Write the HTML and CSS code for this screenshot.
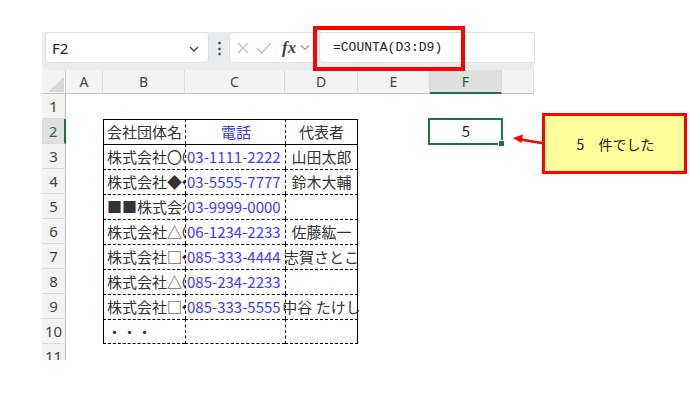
FILE: index.html
```html
<!DOCTYPE html>
<html lang="ja">
<head>
    <meta charset="UTF-8">
    <meta name="viewport" content="width=device-width, initial-scale=1.0">
    <title>COUNTA</title>
    <link rel="stylesheet" href="styles.css">
</head>
<body>
    <div class="sheet">
        <div class="formula-bar">
            <div class="name-box">
                <span>F2</span>
                <svg class="chev" width="12" height="8" viewBox="0 0 12 8"><polyline points="2,2 6,6 10,2" fill="none" stroke="#444" stroke-width="1.4"/></svg>
            </div>
            <div class="dots">⋮</div>
            <div class="fx-box">
                <svg width="14" height="14" viewBox="0 0 14 14"><path d="M2 2 L12 12 M12 2 L2 12" stroke="#bdbdbd" stroke-width="1.2" fill="none"/></svg>
                <svg width="16" height="14" viewBox="0 0 16 14"><polyline points="1,7 5.5,12 15,2" stroke="#bdbdbd" stroke-width="1.2" fill="none"/></svg>
                <span class="fx">fx</span>
                <svg width="10" height="7" viewBox="0 0 10 7"><polyline points="1,1.5 5,5.5 9,1.5" fill="none" stroke="#9a9a9a" stroke-width="1.2"/></svg>
            </div>
            <div class="formula">=COUNTA(D3:D9)</div>
        </div>

        <div class="grid">
            <!-- column headers -->
            <div class="corner"><svg width="18" height="16" viewBox="0 0 18 16"><polygon points="17,0 17,15 1,15" fill="#d7d7d7"/></svg></div>
            <div class="col-head">A</div>
            <div class="col-head">B</div>
            <div class="col-head">C</div>
            <div class="col-head">D</div>
            <div class="col-head">E</div>
            <div class="col-head active">F</div>
            <div class="col-head"><span class="cut">G</span></div>

            <!-- 1 -->
            <div class="row-head">1</div>
            <div></div><div></div><div></div><div></div><div></div><div></div><div></div>

            <!-- 2 -->
            <div class="row-head active">2</div>
            <div></div>
            <div class="t top-solid left-solid">会社団体名</div>
            <div class="t top-solid center blue">電話</div>
            <div class="t top-solid right-solid center">代表者</div>
            <div></div>
            <div class="center selected">5<span class="handle"></span></div>
            <div></div>

            <!-- 3 -->
            <div class="row-head">3</div>
            <div></div>
            <div class="t top-solid left-solid clip">株式会社〇〇〇〇</div>
            <div class="t top-solid blue">03-1111-2222</div>
            <div class="t top-solid right-solid center"><span>山田太郎</span></div>
            <div></div><div></div><div></div>

            <!-- 4 -->
            <div class="row-head">4</div>
            <div></div>
            <div class="t left-solid clip">株式会社◆◆◆◆</div>
            <div class="t blue">03-5555-7777</div>
            <div class="t right-solid center"><span>鈴木大輔</span></div>
            <div></div><div></div><div></div>

            <!-- 5 -->
            <div class="row-head">5</div>
            <div></div>
            <div class="t left-solid clip">■■株式会社</div>
            <div class="t blue">03-9999-0000</div>
            <div class="t right-solid center"></div>
            <div></div><div></div><div></div>

            <!-- 6 -->
            <div class="row-head">6</div>
            <div></div>
            <div class="t left-solid clip">株式会社△〇〇</div>
            <div class="t blue">06-1234-2233</div>
            <div class="t right-solid center"><span>佐藤紘一</span></div>
            <div></div><div></div><div></div>

            <!-- 7 -->
            <div class="row-head">7</div>
            <div></div>
            <div class="t left-solid clip">株式会社□◆◆</div>
            <div class="t blue">085-333-4444</div>
            <div class="t right-solid center"><span>志賀さとこ</span></div>
            <div></div><div></div><div></div>

            <!-- 8 -->
            <div class="row-head">8</div>
            <div></div>
            <div class="t left-solid clip">株式会社△〇〇</div>
            <div class="t blue">085-234-2233</div>
            <div class="t right-solid center"></div>
            <div></div><div></div><div></div>

            <!-- 9 -->
            <div class="row-head">9</div>
            <div></div>
            <div class="t left-solid clip">株式会社□◆◆</div>
            <div class="t blue">085-333-5555</div>
            <div class="t right-solid center"><span>中谷 たけし</span></div>
            <div></div><div></div><div></div>

            <!-- 10 -->
            <div class="row-head">10</div>
            <div></div>
            <div class="t left-solid last clip">・・・</div>
            <div class="t last"></div>
            <div class="t right-solid last"></div>
            <div></div><div></div><div></div>

            <!-- 11 -->
            <div class="row-head short">11</div>
            <div></div><div></div><div></div><div></div><div></div><div></div><div></div>
        </div>
    </div>

    <!-- annotations -->
    <div class="red-frame"></div>
    <svg class="arrow" width="40" height="20" viewBox="0 0 40 20">
        <line x1="36" y1="14" x2="10" y2="9.5" stroke="#ff0000" stroke-width="2.6"/>
        <polygon points="2,8 12,4.5 10.5,13" fill="#ff0000"/>
    </svg>
    <div class="callout">5　件でした</div>
</body>
</html>
```

FILE: styles.css
```css
body {
    margin: 0;
    background-color: #ffffff;
    font-family: "Noto Sans", sans-serif;
    position: relative;
    width: 690px;
    height: 398px;
    overflow: hidden;
}
.sheet {
    margin: 32px 0 0 42px;
    width: 492px;
}
.formula-bar {
    height: 38px;
    background-color: #e9edf0;
    display: flex;
    align-items: flex-start;
    padding: 1px 0 0 4px;
    box-sizing: border-box;
}
.name-box {
    width: 162px;
    height: 29px;
    background-color: #ffffff;
    border-radius: 4px;
    box-shadow: 0 0 0 1px #dde1e4;
    display: flex;
    align-items: center;
    justify-content: space-between;
    padding: 0 8px 0 6px;
    box-sizing: border-box;
    font-size: 15px;
    color: #222222;
}
.chev {
    margin-top: 2px;
}
.dots {
    width: 22px;
    height: 29px;
    line-height: 29px;
    text-align: center;
    font-size: 15px;
    font-weight: bold;
    color: #444444;
}
.fx-box {
    width: 86px;
    height: 29px;
    background-color: #ffffff;
    border-radius: 4px;
    box-shadow: 0 0 0 1px #dde1e4;
    display: flex;
    align-items: center;
    gap: 6px;
    padding-left: 6px;
    box-sizing: border-box;
}
.fx {
    font-family: "Liberation Serif", serif;
    font-style: italic;
    font-weight: bold;
    font-size: 17px;
    color: #444444;
    margin-left: 4px;
    margin-right: -2px;
}
.formula {
    flex: 1;
    height: 29px;
    margin-left: 4px;
    background-color: #ffffff;
    border-radius: 4px 0 0 4px;
    box-shadow: 0 0 0 1px #dde1e4;
    font-family: "Liberation Mono", monospace;
    font-size: 13px;
    color: #222222;
    line-height: 29px;
    padding-left: 13px;
}

.grid {
    display: grid;
    grid-template-columns: 24px 37px 82px 100px 73px 72px 72px 32px;
    grid-template-rows: 24px repeat(10, 25px) 16px;
    font-family: "Noto Sans CJK JP", sans-serif;
    font-size: 15px;
    color: #333333;
}
.grid > div {
    box-sizing: border-box;
    white-space: nowrap;
    line-height: 24px;
}
.corner {
    background-color: #f3f3f3;
    border-right: 1px solid #d2d2d2;
    border-bottom: 1px solid #c4c4c4;
    display: flex;
    align-items: flex-end;
    justify-content: flex-end;
}
.col-head {
    background-color: #f3f3f3;
    border-right: 1px solid #dadada;
    border-bottom: 1px solid #c4c4c4;
    text-align: center;
    font-family: "Noto Sans", sans-serif;
    font-size: 14px;
    color: #444444;
    overflow: hidden;
}
.col-head.active {
    background-color: #e0e0e0;
    color: #1d6b41;
    border-bottom: 2px solid #1e7145;
}
.cut {
    position: relative;
    left: 31px;
    color: #b0541d;
}
.row-head {
    background-color: #f3f3f3;
    border-right: 1px solid #c4c4c4;
    border-bottom: 1px solid #dadada;
    text-align: center;
    font-family: "Noto Sans", sans-serif;
    font-size: 15px;
    color: #444444;
}
.row-head.active {
    background-color: #e0e0e0;
    color: #1d6b41;
    border-right: 2px solid #1e7145;
}
.row-head.short {
    border-bottom: none;
    overflow: hidden;
}

/* table cells */
.t {
    border-top: 1px dashed #000000;
    border-left: 1px dashed #000000;
    padding-left: 3px;
}
.t.top-solid {
    border-top: 1px solid #000000;
}
.t.left-solid {
    border-left: 1px solid #000000;
}
.t.right-solid {
    border-right: 1px solid #000000;
}
.t.last {
    border-bottom: 1px dashed #000000;
}
.t.clip {
    overflow: hidden;
}
.center {
    display: flex;
    justify-content: center;
    padding-left: 0;
}
.blue {
    color: #3b3bff;
    padding-left: 1px;
}
.selected {
    position: relative;
    color: #222222;
}
.selected::before {
    content: "";
    position: absolute;
    left: -2px;
    top: -1px;
    right: -1px;
    bottom: -1px;
    border: 2px solid #1e7145;
}
.handle {
    position: absolute;
    right: -3px;
    bottom: -3px;
    width: 5px;
    height: 5px;
    background-color: #1e7145;
    border: 1px solid #ffffff;
}

/* annotations */
.red-frame {
    position: absolute;
    left: 313px;
    top: 26px;
    width: 152px;
    height: 45px;
    border: 4px solid #ff0000;
    box-sizing: border-box;
}
.arrow {
    position: absolute;
    left: 511px;
    top: 130px;
}
.callout {
    position: absolute;
    left: 542px;
    top: 113px;
    width: 145px;
    height: 61px;
    box-sizing: border-box;
    border: 3px solid #ff0000;
    background-color: #ffff99;
    font-family: "Noto Sans CJK JP", sans-serif;
    font-size: 14px;
    color: #222222;
    display: flex;
    align-items: center;
    justify-content: center;
    padding-left: 2px;
}
```
